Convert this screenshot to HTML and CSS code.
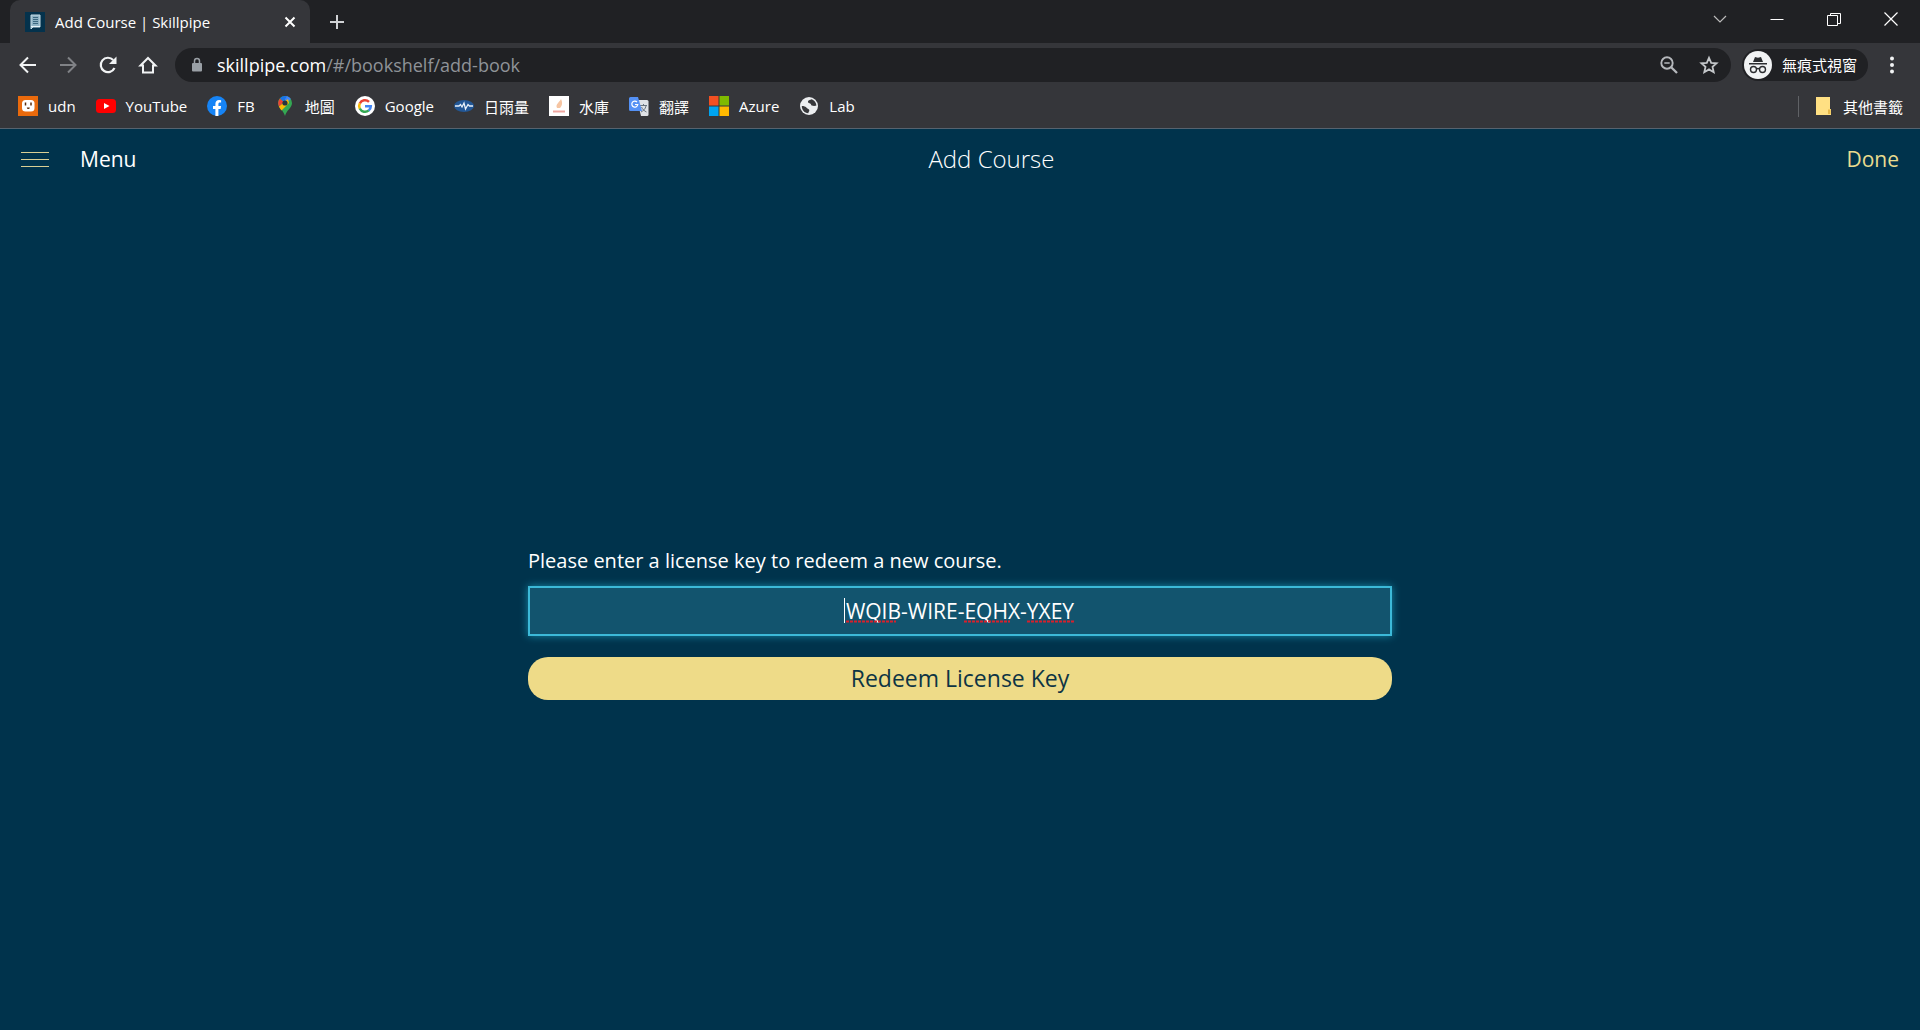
FILE: index.html
```html
<!DOCTYPE html>
<html lang="zh-Hant">
<head>
<meta charset="utf-8">
<meta name="viewport" content="width=device-width, initial-scale=1">
<title>Add Course | Skillpipe</title>
<link rel="stylesheet" href="styles.css">
</head>
<body>
<header class="browser">
  <div class="tabstrip">
    <div class="tab">
      <svg class="icon" viewBox="0 0 20 20"><rect width="20" height="20" fill="#04324c"/><path d="M6 3h9v12H8l-2 2z" fill="#8fb3c4" stroke="#c5dce6"/><path d="M8 5.500h5M8 7.500h5M8 9.500h5M8 11.500h5" stroke="#3c6880"/><path d="M6 14.500h9" stroke="#e8f4f8"/></svg>
      <span class="tab-title">Add Course | Skillpipe</span>
      <button class="plain" aria-label="Close tab"><svg class="glyph" viewBox="0 0 12 12"><path d="M1.500 1.500l9 9M10.500 1.500l-9 9" stroke="#fff" stroke-width="2"/></svg></button>
    </div>
    <button class="plain new-tab" aria-label="New tab"><svg class="plus" viewBox="0 0 16 16"><path d="M8 1v14M1 8h14" stroke="#d0d2d5" stroke-width="2"/></svg></button>
    <div class="window-controls">
      <button class="plain" aria-label="Search tabs"><svg class="plus" viewBox="0 0 16 16" fill="none"><path d="M2 5l6 6 6-6" stroke="#bbb" stroke-width="1.200"/></svg></button>
      <button class="plain" aria-label="Minimize"><svg class="plus" viewBox="0 0 16 16"><path d="M1.500 8.500h13" stroke="#fff"/></svg></button>
      <button class="plain" aria-label="Restore"><svg class="plus" viewBox="0 0 16 16" fill="none"><path d="M1.500 4.500h10v10h-10zM4.500 4V2.500h10v10H12" stroke="#fff"/></svg></button>
      <button class="plain" aria-label="Close"><svg class="plus" viewBox="0 0 16 16"><path d="M1.500 1.500l13 13M14.500 1.500l-13 13" stroke="#fff" stroke-width="1.200"/></svg></button>
    </div>
  </div>

  <div class="toolbar">
    <nav class="nav-buttons" aria-label="Navigation">
      <button class="plain" aria-label="Back"><svg class="icon" viewBox="0 0 20 20" fill="none"><path d="M18 10H3M10 2.500L2.500 10l7.500 7.500" stroke="#f1f3f4" stroke-width="2"/></svg></button>
      <button class="plain" aria-label="Forward"><svg class="icon" viewBox="0 0 20 20" fill="none"><path d="M2 10h15M10 2.500l7.500 7.500-7.500 7.500" stroke="#808286" stroke-width="2"/></svg></button>
      <button class="plain" aria-label="Reload"><svg class="icon" viewBox="0 0 20 20" fill="none"><path d="M16.500 13A7.200 7.200 0 1 1 15.200 5" stroke="#f1f3f4" stroke-width="2.200"/><path d="M18.500 1.500V9H11z" fill="#f1f3f4"/></svg></button>
      <button class="plain" aria-label="Home"><svg class="icon" viewBox="0 0 20 20" fill="none"><path d="M2.500 10.500L10 3l7.500 7.500H15V17.500H5V10.500z" stroke="#f1f3f4" stroke-width="2"/></svg></button>
    </nav>
    <div class="omnibox">
      <svg class="lock" viewBox="0 0 12 16"><rect x="1" y="6" width="10" height="8.500" rx="1" fill="#9aa0a6"/><path d="M3.500 7V4a2.500 2.500 0 0 1 5 0v3" fill="none" stroke="#9aa0a6" stroke-width="1.500"/></svg>
      <span class="url"><span class="host">skillpipe.com</span>/#/bookshelf/add-book</span>
      <button class="plain" aria-label="Zoom"><svg class="icon" viewBox="0 0 20 20" fill="none"><circle cx="8" cy="8" r="5.700" stroke="#b5b8bc" stroke-width="1.900"/><path d="M12.200 12.200L18 18" stroke="#b5b8bc" stroke-width="2.300"/><path d="M5.300 8h5.400" stroke="#b5b8bc" stroke-width="1.500"/></svg></button>
      <button class="plain" aria-label="Bookmark this page"><svg class="icon" viewBox="0 0 20 20" fill="none"><path d="M10 2.800l2.200 5 5.400.500-4.100 3.600 1.200 5.300L10 14.400l-4.700 2.800 1.200-5.300L2.400 8.300l5.400-.5z" stroke="#c4c7ca" stroke-width="1.800"/></svg></button>
    </div>
    <div class="incognito">
      <svg class="avatar" viewBox="0 0 28 28"><circle cx="14" cy="14" r="14" fill="#f1f3f4"/><path d="M9 11l2-5 3 .7L17 6l2 5zM5 12h18v1.500H5z" fill="#2b2d30"/><g fill="none" stroke="#2b2d30" stroke-width="1.400"><circle cx="9.500" cy="18.500" r="3"/><circle cx="18.500" cy="18.500" r="3"/><path d="M12.500 18q1.500-1 3 0"/></g></svg>
      <span>無痕式視窗</span>
    </div>
    <button class="plain menu-dots" aria-label="More"><svg class="icon" viewBox="0 0 20 20" fill="#f1f3f4"><circle cx="10" cy="3.500" r="2"/><circle cx="10" cy="10" r="2"/><circle cx="10" cy="16.500" r="2"/></svg></button>
  </div>

  <nav class="bookmarks" aria-label="Bookmarks">
    <a href="#"><svg class="icon" viewBox="0 0 20 20"><rect width="20" height="20" fill="#ea6a0c"/><rect x="4" y="4" width="12.500" height="11.500" rx="3.500" fill="#fff"/><path d="M7.500 6.500v3M13 6.500v3" stroke="#5a2a08" stroke-width="1.500"/><path d="M8.800 11.500h3a1.500 1.500 0 0 1-3 0z" fill="#5a2a08"/></svg><span>udn</span></a>
    <a href="#"><svg class="icon" viewBox="0 0 20 20"><rect y="3" width="20" height="14" rx="3.500" fill="#f00"/><path d="M8 7l5.500 3L8 13z" fill="#fff"/></svg><span>YouTube</span></a>
    <a href="#"><svg class="icon" viewBox="0 0 20 20"><circle cx="10" cy="10" r="10" fill="#1684f6"/><path d="M8.400 20v-7H6v-3h2.400V7.800c0-2.500 1.500-3.800 3.700-3.800l2 .2v2.400h-1.200c-1.100 0-1.500.7-1.500 1.500V10h2.700l-.5 3h-2.200v7z" fill="#fff"/></svg><span>FB</span></a>
    <a href="#"><svg class="icon" viewBox="0 0 20 20"><path d="M10 0a7 7 0 0 1 7 7c0 5-5.500 7-7 13C8.500 14 3 12 3 7a7 7 0 0 1 7-7z" fill="#34a853"/><path d="M9.500 0c3-.2 5 1 6.300 3L10 9z" fill="#4285f4"/><path d="M3.800 10.500L13 3l1 4-7.500 7.500c-1-1.200-2-2.500-2.700-4z" fill="#fbbc04"/><path d="M5 2.400L9 6 4 10.500C2.500 7.500 3 4.500 5 2.400z" fill="#ea4335"/><path d="M5 2.400C6.500.7 8 0 10 0l2 .3L8.500 5.500z" fill="#1a73e8"/><circle cx="10" cy="7" r="2.600" fill="#27343f"/></svg><span>地圖</span></a>
    <a href="#"><svg class="icon" viewBox="0 0 20 20"><circle cx="10" cy="10" r="10" fill="#fff"/><g fill="none" stroke-width="2.500"><path d="M14 5.800A5.800 5.800 0 0 0 4.800 7.500" stroke="#ea4335"/><path d="M4.800 7.400a5.800 5.800 0 0 0 0 5.200" stroke="#fbbc05"/><path d="M4.800 12.500a5.800 5.800 0 0 0 9 1.900" stroke="#34a853"/><path d="M13.700 14.500a5.600 5.600 0 0 0 2.100-4.300H10" stroke="#4285f4"/></g></svg><span>Google</span></a>
    <a href="#"><svg class="icon" viewBox="0 0 20 20"><ellipse cx="10" cy="10" rx="10" ry="6" fill="#225796"/><path d="M1 10h4l1.500-1.500L8 11l2-4 1.500 6L14 8.500l1.500 1.500H19" fill="none" stroke="#e8f1fa" stroke-width="1.300"/></svg><span>日雨量</span></a>
    <a href="#"><svg class="icon" viewBox="0 0 20 20"><rect width="20" height="20" fill="#fff"/><path d="M8 12c-2-4 3-6 4-9 2 4 1 7-1 9z" fill="#f6c5a2"/><path d="M4 15.500h12" stroke="#efa6a0" stroke-width="2"/></svg><span>水庫</span></a>
    <a href="#"><svg class="icon" viewBox="0 0 20 20"><path d="M8 4h10a1.500 1.500 0 0 1 1.500 1.500v13A1.500 1.500 0 0 1 18 20h-6z" fill="#dfe2e6"/><path d="M11 9.500h7M14.500 8v1.500M17 10c-.5 3-3 5-5 6M12.500 11c1 2.500 3 4 5 5" fill="none" stroke="#697580"/><path d="M1.500 1H9l4 14H1.500A1.500 1.500 0 0 1 0 13.500v-11A1.500 1.500 0 0 1 1.500 1z" fill="#5491f5"/><path d="M8 6a3 3 0 1 0 .8 2.500H6" fill="none" stroke="#fff" stroke-width="1.200"/></svg><span>翻譯</span></a>
    <a href="#"><svg class="icon" viewBox="0 0 20 20"><path fill="#f25022" d="M0 0h9.500v9.500H0z"/><path fill="#7fba00" d="M10.500 0H20v9.500h-9.500z"/><path fill="#00a4ef" d="M0 10.500h9.500V20H0z"/><path fill="#ffb900" d="M10.500 10.500H20V20h-9.500z"/></svg><span>Azure</span></a>
    <a href="#"><svg class="icon" viewBox="0 0 20 20"><circle cx="10" cy="10" r="9" fill="#eceef0"/><path d="M2.800 10c2 0 4 .5 5 2 .7 1.200 2.500.5 2.500 2.500 0 1-1 1.500-1 2.700C5.500 17 2.800 14 2.800 10zM12 3.300c-1 1.200-3 .7-3 2.700 0 1.500 3 1 3 2.500 0 1.500 2.500 1.500 5.300 1.300C17.500 6.500 15 4 12 3.300z" fill="#37383b"/></svg><span>Lab</span></a>
    <a href="#" class="other"><svg class="icon" viewBox="0 0 20 20"><path d="M3 1h14v12h1v6H3z" fill="#ffe083"/><path d="M15 18v-4.500h2.500V18z" fill="#e7b847"/></svg><span>其他書籤</span></a>
  </nav>
</header>

<div class="app">
  <header class="app-bar">
    <button class="plain menu"><svg class="burger" viewBox="0 0 30 18"><path d="M1 2.500h28M1 9.500h28M1 16.500h28" stroke="#d9cf94"/></svg><span>Menu</span></button>
    <h1>Add Course</h1>
    <a class="done" href="#">Done</a>
  </header>
  <main>
    <form class="redeem">
      <label for="key">Please enter a license key to redeem a new course.</label>
      <div class="field">
        <input id="key" type="text" value="WQIB-WIRE-EQHX-YXEY" spellcheck="false">
        <svg class="spelling" viewBox="0 0 236 30" aria-hidden="true">
          <path d="M2.500 2v25" stroke="#fff"/>
          <path d="M4 25.500h50M122 25.500h46M185 25.500h48" fill="none" stroke="#d8202c" stroke-width="2" stroke-dasharray="3 1"/>
        </svg>
      </div>
      <button class="submit" type="button">Redeem License Key</button>
    </form>
  </main>
</div>
</body>
</html>
```

FILE: styles.css
```css
* { box-sizing: border-box; }

body {
  margin: 0;
  min-height: 100vh;
  display: flex;
  flex-direction: column;
  background: #00334c;
  color: #fff;
  font-family: "Open Sans", "Noto Sans CJK TC", sans-serif;
}

a { color: inherit; text-decoration: none; }
svg { display: block; flex: none; }

.plain {
  display: flex;
  align-items: center;
  padding: 0;
  border: 0;
  background: none;
  color: inherit;
  font: inherit;
}

.icon { width: 20px; height: 20px; }
.glyph { width: 12px; height: 12px; }
.plus { width: 16px; height: 16px; }

/* Browser frame */
.browser { background: #35363a; border-bottom: 1px solid #56636f; }

.tabstrip {
  display: flex;
  height: 43px;
  padding-left: 10px;
  background: #202124;
}

.tab {
  display: flex;
  align-items: center;
  gap: 10px;
  width: 300px;
  padding: 0 14px 0 15px;
  border-radius: 10px 10px 0 0;
  background: #35363a;
  font-size: 15px;
}

.tab-title { flex: 1; white-space: nowrap; }
.new-tab { margin-left: 19px; }

.window-controls {
  display: flex;
  gap: 41px;
  height: 38px;
  margin-left: auto;
  padding-right: 21px;
}

.toolbar {
  display: flex;
  align-items: center;
  height: 45px;
  padding: 0 18px 2px;
}

.nav-buttons { display: flex; gap: 20px; margin-right: 17px; }

.omnibox {
  display: flex;
  align-items: center;
  flex: 1;
  gap: 20px;
  height: 34px;
  padding: 0 12px 0 16px;
  border-radius: 17px;
  background: #202124;
}

.lock { width: 12px; height: 16px; }
.url { flex: 1; margin-left: -6px; color: #8f9398; font-size: 18px; }
.host { color: #fff; }

.incognito {
  display: flex;
  align-items: center;
  gap: 10px;
  height: 32px;
  margin-left: 11px;
  padding: 0 11px 0 2px;
  border-radius: 16px;
  background: #202124;
  font-size: 15px;
}

.avatar { width: 28px; height: 28px; }
.menu-dots { margin-left: 14px; }

.bookmarks {
  display: flex;
  align-items: center;
  gap: 20px;
  height: 40px;
  padding: 0 17px 4px 18px;
  font-size: 15px;
}

.bookmarks a { display: flex; align-items: center; gap: 10px; white-space: nowrap; }
.bookmarks .other { margin-left: auto; padding-left: 14px; border-left: 1px solid #606266; }

/* Skillpipe page */
.app { flex: 1; display: flex; flex-direction: column; }

.app-bar {
  display: flex;
  align-items: center;
  height: 60px;
  padding: 0 21px 0 20px;
  font-size: 21px;
}

.menu { gap: 30px; }
.burger { width: 30px; height: 18px; }
.app-bar h1 { flex: 1; margin: 0; font-size: 24px; font-weight: 300; line-height: 32px; text-align: center; }
.done { color: #e9dc8f; }

main {
  flex: 1;
  display: flex;
  align-items: center;
  justify-content: center;
  padding-top: 26px;
}

.redeem { display: flex; flex-direction: column; width: 45%; }
.redeem label { margin-bottom: 10px; font-size: 20px; line-height: 30px; }
.field { position: relative; }

.field input {
  display: block;
  width: 100%;
  height: 50px;
  padding: 0;
  border: 2px solid #3cb9d8;
  outline: 0;
  background: #12546e;
  box-shadow: 0 0 8px #1687a5;
  color: #fff;
  font: inherit;
  font-size: 21px;
  text-align: center;
}

/* Caret and spelling marks drawn over the field */
.spelling {
  position: absolute;
  inset: 0;
  margin: auto;
  width: 236px;
  height: 30px;
  pointer-events: none;
}

.submit {
  height: 43px;
  margin-top: 21px;
  padding: 0;
  border: 0;
  border-radius: 20px;
  background: #eedb88;
  color: #0d3444;
  font: inherit;
  font-size: 23px;
}
```
